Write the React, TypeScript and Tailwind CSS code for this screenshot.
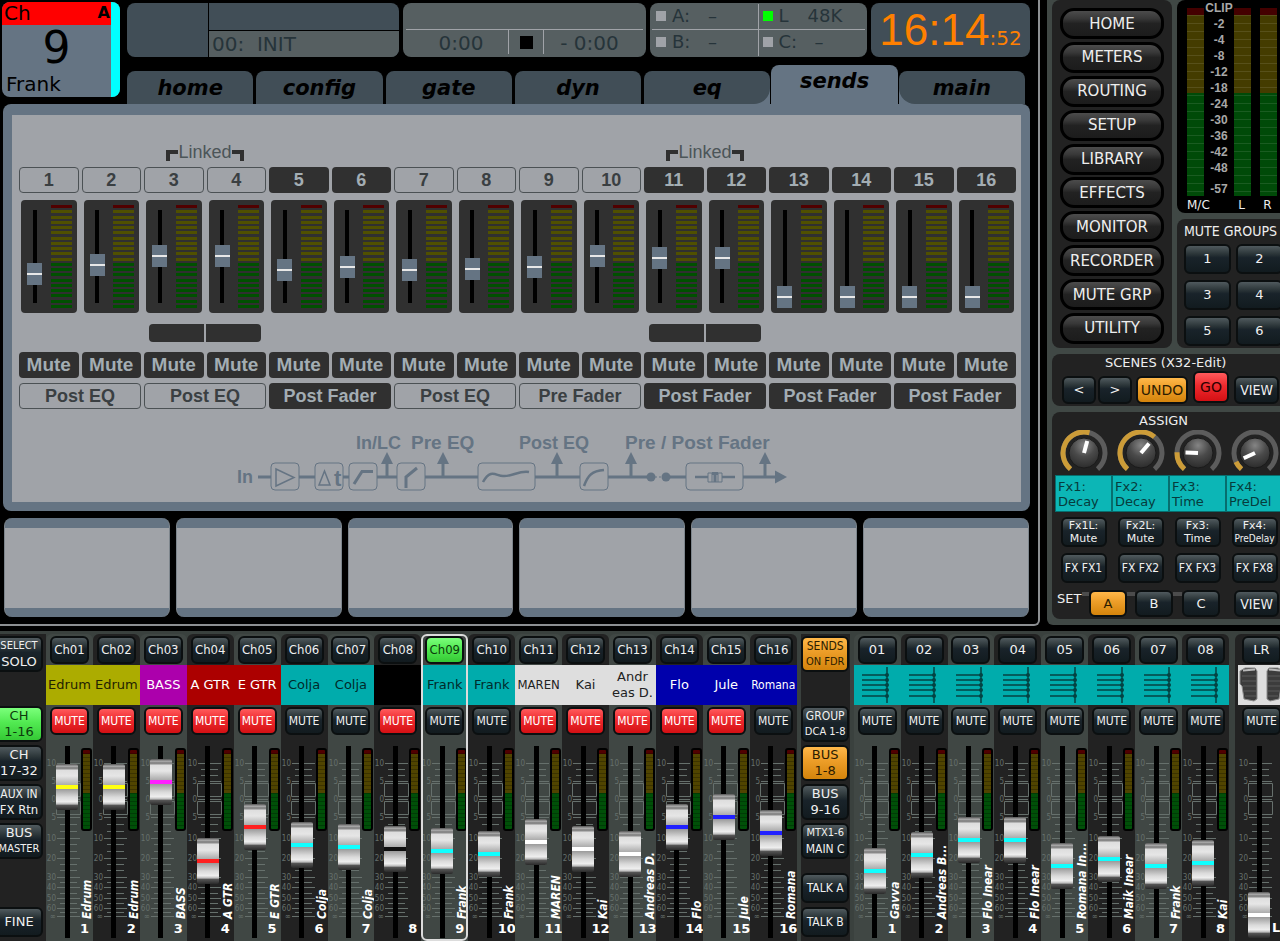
import { clsx } from "clsx";

const SANS = "font-['DejaVu_Sans',sans-serif]";
const NARROW = "font-['DejaVu_Sans_Condensed','DejaVu_Sans',sans-serif]";
const LCD = "font-['Liberation_Sans',sans-serif]";

type Tone = "dark" | "red" | "green" | "orange";

const tones: Record<Tone, string> = {
  dark: "text-[#f0f0f0] bg-[linear-gradient(#505a5e,#2c3639_30%,#19232a_45%,#121b1f)]",
  red: "text-white bg-[linear-gradient(#ff5a5c,#ee2a2e_45%,#d41014)]",
  green: "text-[#0c3a0c] bg-[linear-gradient(#7bff7b,#52ea52_45%,#35c935)]",
  orange: "text-[#2c1c00] bg-[linear-gradient(#ffb84a,#ee9f2a_40%,#d4840c)]",
};

function Key({ tone = "dark", className, children, label }: {
  tone?: Tone;
  className?: string;
  children: React.ReactNode;
  label?: string;
}) {
  return (
    <button
      type="button"
      aria-label={label}
      className={clsx(
        "shrink-0 flex flex-col items-center justify-center rounded-md border-2 border-[#0b0f10] whitespace-nowrap",
        tones[tone],
        className
      )}
    >
      {children}
    </button>
  );
}

/* ---------- channel screen ---------- */

const tabs = ["home", "config", "gate", "dyn", "eq", "sends", "main"];

const sends = [
  { level: 23 }, { level: 32 }, { level: 41 }, { level: 41 },
  { level: 27, dark: true }, { level: 30, dark: true }, { level: 27 }, { level: 28 },
  { level: 30 }, { level: 41 }, { level: 39, dark: true }, { level: 39, dark: true },
  { level: 0, dark: true }, { level: 0, dark: true }, { level: 0, dark: true }, { level: 0, dark: true },
];

const pairs = [
  { tap: "Post EQ" },
  { tap: "Post EQ", linked: true },
  { tap: "Post Fader", dark: true },
  { tap: "Post EQ" },
  { tap: "Pre Fader" },
  { tap: "Post Fader", dark: true, linked: true },
  { tap: "Post Fader", dark: true },
  { tap: "Post Fader", dark: true },
];

const lightBox = "border border-[#4b5154] text-[#3a3f42]";
const darkBox = "bg-[#303030] text-[#a3adb3]";

function ChannelBadge() {
  return (
    <div className={clsx(SANS, "w-[118px] h-[95px] mt-[2px] ml-[2px] shrink-0 flex rounded-lg overflow-hidden bg-[#657483] text-black")}>
      <div className="flex-1 flex flex-col">
        <div className="h-[23px] bg-[#ff0000] flex justify-between pl-[2px] pr-px leading-[22px]">
          <span className="text-xl leading-[22px]">Ch</span>
          <span className="text-base font-bold leading-[22px]">A</span>
        </div>
        <div className="flex-1 text-[44px] leading-[46px] text-center">9</div>
        <div className="text-xl leading-[26px] pl-1">Frank</div>
      </div>
      <div className="w-[9px] bg-[#00ffff]" />
    </div>
  );
}

function SyncLight({ on, name, value }: { on?: boolean; name: string; value: string }) {
  return (
    <div className="flex items-center text-lg leading-6 text-[#26343a] pl-1">
      <span className={clsx("size-[10px] mr-[6px]", on ? "bg-[#00ff00]" : "bg-[#a0a3a8]")} />
      <span className={on ? "w-[29px]" : "w-9"}>{name}</span>
      <span>{value}</span>
    </div>
  );
}

function StatusRow() {
  return (
    <div className={clsx(SANS, "grid grid-cols-[272fr_243fr_217fr_159fr] gap-1 mt-[3px] h-[54px]")}>
      <div className="flex rounded-lg overflow-hidden bg-[#414e57]">
        <div className="w-[81px]" />
        <div className="flex-1 flex flex-col border-l border-black">
          <div className="h-[27px]" />
          <div className="flex-1 border-t border-black bg-[#565f61] text-xl leading-[26px] text-[#26343a] whitespace-pre pl-[3px]">
            {"00:  INIT"}
          </div>
        </div>
      </div>
      <div className="rounded-lg bg-[#565f61] px-[3px] text-[#26343a] text-xl">
        <div className="h-[27px] border-b border-[#a0a3a8]" />
        <div className="h-6 flex items-stretch leading-[26px]">
          <span className="w-[102px] text-center pl-2">0:00</span>
          <span className="w-9 border-x border-[#a0a3a8] flex items-center justify-center">
            <span className="size-[13px] bg-black" />
          </span>
          <span className="flex-1 text-center pr-2">- 0:00</span>
        </div>
      </div>
      <div className="rounded-lg bg-[#565f61] px-[2px] grid grid-cols-2 grid-rows-2 py-px">
        <div className="border-r border-b border-[#a0a3a8]"><SyncLight name="A:" value="–" /></div>
        <div className="border-b border-[#a0a3a8]"><SyncLight on name="L" value="48K" /></div>
        <div className="border-r border-[#a0a3a8]"><SyncLight name="B:" value="–" /></div>
        <div><SyncLight name="C:" value="–" /></div>
      </div>
      <div className="rounded-lg bg-[#414e57] flex items-baseline justify-center text-[#ff8000]">
        <span className={clsx(LCD, "text-[44px] leading-[54px]")}>16:14</span>
        <span className="text-xl">:52</span>
      </div>
    </div>
  );
}

function Tabs() {
  return (
    <ul className="mt-auto pr-[5px] flex items-end gap-[3px]">
      {tabs.map((tab) => (
        <li
          key={tab}
          className={clsx(
            "flex-1",
            tab === "sends" && "-mx-[2px]",
            (tab === "eq" || tab === "main") && "bg-[linear-gradient(to_top,#657483_16px,transparent_16px)]"
          )}
        >
          <button
            type="button"
            className={clsx(
              SANS,
              "block w-full rounded-t-lg text-[21px] leading-8 font-bold italic text-black",
              tab === "sends" ? "h-[39px] bg-[#657483] pb-[7px]" : "h-[33px] bg-[#414e57]",
              tab === "eq" && "rounded-br-2xl",
              tab === "main" && "rounded-bl-2xl"
            )}
          >
            {tab}
          </button>
        </li>
      ))}
    </ul>
  );
}

function SendFader({ index, level }: { index: number; level: number }) {
  return (
    <div className="mx-[2px] h-[113px] rounded-[4px] bg-[#303030] flex justify-between pl-[6px] pr-[5px] py-[5px]">
      <input
        type="range"
        min={0}
        max={81}
        defaultValue={level}
        aria-label={`Send ${index + 1} level`}
        className="appearance-none [writing-mode:vertical-lr] [direction:rtl] w-[15px] h-[103px] bg-[linear-gradient(#000,#000)] bg-[length:4px_93px] bg-center bg-no-repeat [&::-webkit-slider-thumb]:appearance-none [&::-webkit-slider-thumb]:w-[15px] [&::-webkit-slider-thumb]:h-[22px] [&::-webkit-slider-thumb]:bg-[linear-gradient(#657483_10px,#e8e8e8_10px,#e8e8e8_12px,#657483_12px)]"
      />
      <div className="w-[21px] flex flex-col justify-between">
        {Array.from({ length: 20 }, (_, i) => (
          <div key={i} className={clsx("h-[3px]", i === 0 ? "bg-[#500000]" : i < 11 ? "bg-[#505000]" : "bg-[#005000]")} />
        ))}
      </div>
    </div>
  );
}

function SignalPath() {
  const taps = [155, 211, 325, 399, 533];
  const boxes = [[39, 28], [83, 28], [117, 28], [165, 28], [246, 57], [348, 28], [454, 57]];
  return (
    <svg viewBox="2 0 568 65" className="block mx-auto mt-[21px] w-[568px] h-[65px]" fill="none" stroke="#657483">
      <path d="M26 47H39M67 47H83M111 47H117M145 47H165M193 47H246M303 47H348M376 47H419M434 47H454M511 47H545" strokeWidth="3" />
      <path d="M419 47H434" strokeDasharray="2 2" />
      {boxes.map(([x, w]) => (
        <rect key={x} x={x} y="33" width={w} height="27" rx="4" strokeWidth="1" />
      ))}
      <path d="M44 39V56L62 47.500Z" strokeWidth="1.5" />
      <path d="M87 55L92.500 41L98 55Z" strokeWidth="1.5" />
      <path d="M122 54L130 41.500H141M174 58V47L185 38" strokeWidth="3" />
      <path d="M251 52C259 38 264 46 271 46C279 47 288 40 297 42" strokeWidth="2.500" />
      <path d="M352 56C356 45 360 41 372 40" strokeWidth="2.500" />
      <path d="M463 47H476M490 47H503" strokeWidth="2.500" />
      <path d="M476 43H490V52H476ZM480 43V52M486 43V52" />
      <path d="M480 43.500H486M483 43V52" strokeWidth="3" />
      {taps.map((x) => (
        <g key={x}>
          <path d={`M${x} 47V33`} strokeWidth="3" />
          <path d={`M${x - 6} 34L${x} 22L${x + 6} 34Z`} fill="#657483" stroke="none" />
        </g>
      ))}
      <g fill="#657483" stroke="none" className={clsx(LCD, "text-lg font-bold")}>
        <circle cx="419" cy="47" r="4.500" />
        <circle cx="434" cy="47" r="4.500" />
        <path d="M543 40.500L555 47L543 53.500Z" />
        <text x="5" y="53">In</text>
        <text x="102" y="56" className="text-[22px]">t</text>
        <text x="124" y="19">In/LC</text>
        <text x="179" y="19" className="text-[19px]">Pre EQ</text>
        <text x="287" y="19">Post EQ</text>
        <text x="393" y="19" className="text-[19px]">Pre / Post Fader</text>
      </g>
    </svg>
  );
}

function SendsPanel() {
  return (
    <section className="ml-[3px] mr-2 rounded-lg bg-[#657483] px-[9px] pt-[11px] pb-[9px]">
      <div className={clsx(LCD, "bg-[#a0a3a8] pt-[27px] pb-[7px] pl-[7px] pr-[5px]")}>
        <div className="grid grid-cols-8 gap-[3px] h-5">
          {pairs.map((pair, i) => (
            <div key={i} className="flex justify-center text-lg leading-5 text-[#4c5558]">
              {pair.linked && (
                <>
                  <span className="mt-2 w-3 h-[11px] border-t-4 border-l-4 border-[#303030]" />
                  Linked
                  <span className="mt-2 w-3 h-[11px] border-t-4 border-r-4 border-[#303030]" />
                </>
              )}
            </div>
          ))}
        </div>
        <div className="grid grid-cols-16 gap-[3px] mt-[5px]">
          {sends.map((send, i) => (
            <button key={i} type="button" className={clsx("h-[26px] rounded-[4px] text-lg leading-6 font-bold", send.dark ? darkBox : lightBox)}>
              {i + 1}
            </button>
          ))}
        </div>
        <div className="grid grid-cols-16 gap-[3px] mt-[7px]">
          {sends.map((send, i) => (
            <SendFader key={i} index={i} level={send.level} />
          ))}
        </div>
        <div className="grid grid-cols-8 gap-[3px] mt-[11px] h-[18px]">
          {pairs.map((pair, i) => (
            <div key={i} className="flex gap-[2px] px-[5px]">
              {pair.linked && (
                <>
                  <span className="flex-1 rounded-l-[4px] bg-[#303030]" />
                  <span className="flex-1 rounded-r-[4px] bg-[#303030]" />
                </>
              )}
            </div>
          ))}
        </div>
        <div className="grid grid-cols-16 gap-[3px] mt-[10px]">
          {sends.map((_, i) => (
            <button key={i} type="button" aria-label={`Mute send ${i + 1}`} className={clsx("h-[26px] rounded-[4px] text-[19px] leading-[26px] font-bold", darkBox)}>
              Mute
            </button>
          ))}
        </div>
        <div className="grid grid-cols-8 gap-[3px] mt-[5px]">
          {pairs.map((pair, i) => (
            <button key={i} type="button" className={clsx("h-[26px] rounded-[4px] text-lg leading-6 font-bold", pair.dark ? darkBox : lightBox)}>
              {pair.tap}
            </button>
          ))}
        </div>
        <SignalPath />
      </div>
    </section>
  );
}

function Screen() {
  return (
    <main className="flex-1 min-w-0 border-r-2 border-b-2 border-[#8c8f92] rounded-br-md pb-[7px]">
      <div className="flex h-[104px]">
        <ChannelBadge />
        <div className="flex-1 flex flex-col ml-[7px] mr-2">
          <StatusRow />
          <Tabs />
        </div>
      </div>
      <SendsPanel />
      <div className="grid grid-cols-6 gap-[6px] mt-[7px] ml-1 mr-[9px]">
        {Array.from({ length: 6 }, (_, i) => (
          <div key={i} className="h-[99px] rounded-lg border-x border-[#7d858c] bg-[linear-gradient(#657483_10px,#a0a3a8_10px,#a0a3a8_90px,#657483_90px)]" />
        ))}
      </div>
    </main>
  );
}

/* ---------- sidebar ---------- */

const menu = ["HOME", "METERS", "ROUTING", "SETUP", "LIBRARY", "EFFECTS", "MONITOR", "RECORDER", "MUTE GRP", "UTILITY"];
const scale = ["CLIP", "-2", "-4", "-8", "-12", "-18", "-24", "-30", "-36", "-42", "-48"];

function OutputMeter() {
  return (
    <div className="w-[17px] h-[188px] bg-[repeating-linear-gradient(transparent_0px,transparent_7px,rgba(255,255,255,0.1)_7px,rgba(255,255,255,0.1)_8px),linear-gradient(#440000_7px,#443c00_7px,#443c00_85px,#004a08_85px)]" />
  );
}

const knobs = [
  { angle: 15, lines: ["Fx1:", "Decay"], mute: ["Fx1L:", "Mute"], fx: "FX FX1" },
  { angle: 40, lines: ["Fx2:", "Decay"], mute: ["Fx2L:", "Mute"], fx: "FX FX2" },
  { angle: -88, lines: ["Fx3:", "Time"], mute: ["Fx3:", "Time"], fx: "FX FX3" },
  { angle: -115, lines: ["Fx4:", "PreDel"], mute: ["Fx4:", "PreDelay"], fx: "FX FX8" },
];

function arc(from: number, to: number) {
  const at = (deg: number) => {
    const rad = (deg * Math.PI) / 180;
    return `${24 + 21 * Math.sin(rad)} ${23 - 21 * Math.cos(rad)}`;
  };
  return `M${at(from)}A21 21 0 ${to - from > 180 ? 1 : 0} 1 ${at(to)}`;
}

function Knob({ angle }: { angle: number }) {
  return (
    <svg viewBox="0 0 48 45" className="block w-12 h-[45px] mx-auto" fill="none">
      <defs>
        <radialGradient id="knob" cx="0.5" cy="0.25" r="0.75">
          <stop offset="0" stopColor="#858585" />
          <stop offset="0.5" stopColor="#4a4a4a" />
          <stop offset="1" stopColor="#2c2c2c" />
        </radialGradient>
      </defs>
      <path d={arc(-140, 140)} stroke="#5c5c5c" strokeWidth="5" />
      <path d={arc(-140, angle)} stroke="#cc9c38" strokeWidth="5" />
      <circle cx="24" cy="23" r="15" fill="url(#knob)" stroke="#1a1a1a" />
      <path d="M24 23V10.500" stroke="#fff" strokeWidth="4" transform={`rotate(${angle} 24 23)`} />
    </svg>
  );
}

function Sidebar() {
  return (
    <aside className={clsx(SANS, "w-[233px] shrink-0 ml-[7px] pl-[5px] pb-[6px] self-start overflow-hidden rounded-bl-md bg-[#404845] text-[#eee]")}>
      <div className="flex gap-[5px] h-[348px]">
        <nav className="w-[120px] shrink-0 rounded-lg bg-[#222] pt-2 pb-1 flex flex-col items-center justify-between">
          {menu.map((item) => (
            <button
              key={item}
              type="button"
              className="w-[104px] h-[31px] shrink-0 rounded-[14px] border-[3px] border-black bg-[linear-gradient(#4c4c4c,#383838_30%,#222_50%,#1c1c1c)] text-[15px] leading-6"
            >
              {item}
            </button>
          ))}
        </nav>
        <div className="w-[112px] shrink-0 flex flex-col gap-[6px]">
          <section className="h-[213px] rounded-lg bg-black pl-[10px] pt-2">
            <div className="flex">
              <OutputMeter />
              <div className={clsx(LCD, "w-[30px] -mt-2 flex flex-col text-xs font-bold text-[#a8a8a8] text-center")}>
                <div className="h-[173px] flex flex-col">
                  {scale.map((mark) => (
                    <span key={mark} className="flex-1 leading-4">{mark}</span>
                  ))}
                </div>
                <span className="mt-2 leading-4">-57</span>
              </div>
              <OutputMeter />
              <div className="w-[9px]" />
              <OutputMeter />
            </div>
            <div className="flex text-xs leading-4">
              <span className="w-[46px]">M/C</span>
              <span className="w-[17px] text-center">L</span>
              <span className="w-[35px] text-center">R</span>
            </div>
          </section>
          <section className="flex-1 rounded-lg bg-[#222] pl-[7px]">
            <h2 className={clsx(NARROW, "text-sm leading-[25px] whitespace-nowrap")}>MUTE GROUPS</h2>
            <div className="grid grid-cols-[47px_47px] gap-x-[5px] gap-y-[6px] text-[13px]">
              {[1, 2, 3, 4, 5, 6].map((n) => (
                <Key key={n} className="h-[30px]" label={`Mute group ${n}`}>{n}</Key>
              ))}
            </div>
          </section>
        </div>
      </div>

      <section className="mt-[6px] w-[240px] h-[52px] rounded-l-lg bg-[#222]">
        <h2 className="text-[13px] leading-[18px] pl-[53px]">SCENES (X32-Edit)</h2>
        <div className="flex items-end pl-[10px] h-8 text-[13px]">
          <Key className="w-[34px] h-7" label="Previous scene">&lt;</Key>
          <Key className="w-[34px] h-7 ml-[2px]" label="Next scene">&gt;</Key>
          <Key tone="orange" className="w-[52px] h-7 ml-1 text-sm">UNDO</Key>
          <Key tone="red" className="w-9 h-8 ml-[5px] self-start -mt-px text-sm text-[#2c0000]!">GO</Key>
          <Key className={clsx(NARROW, "w-[45px] h-7 ml-[5px] text-sm")}>VIEW</Key>
        </div>
      </section>

      <section className="mt-[6px] w-[240px] rounded-l-lg bg-[#222] pl-[3px] pb-[2px]">
        <h2 className="text-[13px] leading-[18px] pl-[84px]">ASSIGN</h2>
        <div className="grid grid-cols-[57px_57px_57px_57px]">
          {knobs.map((knob) => (
            <div key={knob.fx} className="flex flex-col">
              <Knob angle={knob.angle} />
              <div className="h-[37px] border border-[#076e6e] bg-[#0cb6b6] text-[#063c3c] text-[13px] leading-[15px] pl-[2px] pt-[3px]">
                {knob.lines[0]}<br />{knob.lines[1]}
              </div>
              <Key className="mx-auto mt-[5px] w-[46px] h-[30px] text-[11px] leading-[13px]">
                <span>{knob.mute[0]}</span>
                <span className={clsx(knob.mute[1] === "PreDelay" && [NARROW, "text-[10px]"])}>{knob.mute[1]}</span>
              </Key>
              <Key className={clsx(NARROW, "mx-auto mt-[6px] w-[46px] h-[30px] text-xs")}>{knob.fx}</Key>
            </div>
          ))}
        </div>
        <div className="flex mt-[7px] text-[13px]">
          <span className="w-[27px] leading-[18px] pl-[2px]">SET</span>
          <span className="w-[7px] h-1 mt-[2px] bg-[#4c4c4c]" />
          <Key tone="orange" className="w-[38px] h-[27px]">A</Key>
          <span className="w-2 h-1 mt-[2px] bg-[#4c4c4c]" />
          <Key className="w-[38px] h-[27px]">B</Key>
          <span className="w-[9px] h-1 mt-[2px] bg-[#4c4c4c]" />
          <Key className="w-[38px] h-[27px]">C</Key>
          <Key className={clsx(NARROW, "w-[45px] h-[27px] ml-[14px] text-sm")}>VIEW</Key>
        </div>
      </section>
    </aside>
  );
}

/* ---------- mixer ---------- */

type Color = "yellow" | "magenta" | "red" | "cyan" | "black" | "white" | "blue";

const scribble: Record<Color, string> = {
  yellow: "bg-[#acac00] text-[#222200]",
  magenta: "bg-[#ac00ac] text-white",
  red: "bg-[#ac0000] text-white",
  cyan: "bg-[#00acac] text-[#002a2a]",
  black: "bg-black text-white",
  white: "bg-[#dedede] text-[#222]",
  blue: "bg-[#0000ac] text-white",
};

const caps: Record<Color, string> = {
  yellow: "[--cap:#ffff10]",
  magenta: "[--cap:#ff20ff]",
  red: "[--cap:#ff2020]",
  cyan: "[--cap:#10ffff]",
  black: "[--cap:#101010]",
  white: "[--cap:#ffffff]",
  blue: "[--cap:#2020ff]",
};

type StripData = {
  id: string;
  no: string;
  name: string;
  display?: React.ReactNode;
  color: Color;
  level: number;
  muted?: boolean;
  selected?: boolean;
};

const channels: StripData[] = [
  { id: "Ch01", no: "1", name: "Edrum", color: "yellow", level: 128, muted: true },
  { id: "Ch02", no: "2", name: "Edrum", color: "yellow", level: 128, muted: true },
  { id: "Ch03", no: "3", name: "BASS", color: "magenta", level: 133, muted: true },
  { id: "Ch04", no: "4", name: "A GTR", color: "red", level: 54, muted: true },
  { id: "Ch05", no: "5", name: "E GTR", color: "red", level: 88, muted: true },
  { id: "Ch06", no: "6", name: "Colja", color: "cyan", level: 70 },
  { id: "Ch07", no: "7", name: "Colja", color: "cyan", level: 68 },
  { id: "Ch08", no: "8", name: "", color: "black", level: 66, muted: true },
  { id: "Ch09", no: "9", name: "Frank", color: "cyan", level: 64, selected: true },
  { id: "Ch10", no: "10", name: "Frank", color: "cyan", level: 61 },
  { id: "Ch11", no: "11", name: "MAREN", display: <span className={NARROW}>MAREN</span>, color: "white", level: 73, muted: true },
  { id: "Ch12", no: "12", name: "Kai", color: "white", level: 66, muted: true },
  { id: "Ch13", no: "13", name: "Andreas D.", display: <span>Andr<br />eas D.</span>, color: "white", level: 61, muted: true },
  { id: "Ch14", no: "14", name: "Flo", color: "blue", level: 88, muted: true },
  { id: "Ch15", no: "15", name: "Jule", color: "blue", level: 98, muted: true },
  { id: "Ch16", no: "16", name: "Romana", display: <span className={clsx(NARROW, "text-xs")}>Romana</span>, color: "blue", level: 82 },
];

const buses: StripData[] = [
  { id: "01", no: "1", name: "Gavva", level: 44 },
  { id: "02", no: "2", name: "Andreas B...", level: 60 },
  { id: "03", no: "3", name: "Flo Inear", level: 75 },
  { id: "04", no: "4", name: "Flo Inear", level: 75 },
  { id: "05", no: "5", name: "Romana In...", level: 49 },
  { id: "06", no: "6", name: "Maik Inear", level: 56 },
  { id: "07", no: "7", name: "Frank", level: 49 },
  { id: "08", no: "8", name: "Kai", level: 52 },
].map((bus) => ({ ...bus, color: "cyan" as Color, display: <BusIcon /> }));

function BusIcon() {
  return (
    <svg viewBox="0 0 32 38" className="w-8 h-[38px]" stroke="#045c5c" strokeWidth="2" fill="#034444">
      <path d="M1 9H26M1 14H26M1 19H26M1 24H26M1 30H26M26 1V37" />
      {[9, 14, 19, 24, 30].map((y) => (
        <circle key={y} cx="26" cy={y} r="2" stroke="none" />
      ))}
    </svg>
  );
}

function SpeakersIcon() {
  return (
    <svg viewBox="0 0 47 38" className="w-[47px] h-[38px] shrink-0">
      {["M2 5L7 2H17L19 5V33L16 35L6 33L4 20L2 18Z", "M45 5L40 2H31L29 5V33L32 35L41 33L43 20L45 18Z"].map((d) => (
        <path key={d} d={d} fill="#3c3c3c" stroke="#8c8c8c" />
      ))}
      <path d="M4 10H18M4 15H18M5 20H18M6 25H18M7 30H18M30 10H43M30 15H43M30 20H42M30 25H41M30 30H40" stroke="#5a5a5a" />
      <path d="M5 4.500L17 3.500M31 3.500L42 4.500" stroke="#b8b8b8" strokeWidth="2" />
    </svg>
  );
}

// dB marks, y measured from the top of the fader slot
const marks: [string, number][] = [
  ["10", 17], ["5", 35], ["0", 53], ["5", 71], ["10", 92], ["20", 112],
  ["30", 131], ["40", 141], ["50", 152], ["60", 162], ["∞", 170],
];
const minor = [23, 29, 78, 85, 98, 105, 118, 124, 136, 147, 157, 166];

function FaderScale() {
  return (
    <svg viewBox="0 0 36 192" className="[grid-area:1/1] w-9 h-48" fill="none" stroke="#66706c" strokeWidth="1">
      {marks.map(([, y], i) => (
        <path key={i} d={`M11 ${y}.500H34`} />
      ))}
      {minor.map((y) => (
        <path key={y} d={`M14 ${y}.500H31`} />
      ))}
      <path d="M10.500 37.500H34.500V50.500H10.500ZM10.500 55.500H34.500V68.500H10.500Z" />
      <g fill="#66706c" stroke="none" className={clsx(NARROW, "text-[8px]")} textAnchor="end">
        {marks.map(([label, y], i) => (
          <text key={i} x="10" y={y + 3}>{label}</text>
        ))}
      </g>
    </svg>
  );
}

function Strip({ strip, light, output }: { strip: StripData; light?: boolean; output?: boolean }) {
  return (
    <div
      className={clsx(
        "relative min-w-0 rounded-t-md pt-[2px] pb-[2px] flex flex-col items-center",
        light ? "bg-[#404744]" : "bg-[#222]",
        strip.selected && "after:absolute after:inset-0 after:rounded-md after:border-2 after:border-[#dcdcdc] after:pointer-events-none"
      )}
    >
      <Key tone={strip.selected ? "green" : "dark"} className={clsx(output ? SANS : NARROW, "w-[39px] h-7 text-[13px]")}>
        {strip.id}
      </Key>
      <div className={clsx("mt-px w-full h-10 flex items-center justify-center text-center text-[13px] leading-4 whitespace-nowrap overflow-hidden", scribble[strip.color])}>
        {strip.display ?? strip.name}
      </div>
      <Key tone={strip.muted ? "red" : "dark"} className={clsx(NARROW, "mt-[2px] w-[39px] h-7 text-xs")}>
        MUTE
      </Key>
      <div className="self-stretch flex mt-[11px]">
        <div className="w-[34px] shrink-0 grid">
          <FaderScale />
          <input
            type="range"
            min={0}
            max={146}
            defaultValue={strip.level}
            aria-label={`${strip.id} fader`}
            className={clsx(
              "[grid-area:1/1] ml-[10px] w-[22px] h-48 appearance-none [writing-mode:vertical-lr] [direction:rtl] bg-[linear-gradient(#000,#000)] bg-[length:5px_100%] bg-center bg-no-repeat [&::-webkit-slider-thumb]:appearance-none [&::-webkit-slider-thumb]:w-[22px] [&::-webkit-slider-thumb]:h-[46px] [&::-webkit-slider-thumb]:rounded-[2px] [&::-webkit-slider-thumb]:bg-[linear-gradient(#555,#aaa_5%,#777_9%,#dedede_14%,#e6e6e6_26%,#aaa_46%,var(--cap)_46%,var(--cap)_54%,#999_54%,#dadada_72%,#eee_82%,#bbb_87%,#555_90%,#2a2a2a)]",
              caps[strip.color]
            )}
          />
        </div>
        {!output || strip.name ? (
          <div className="flex-1 min-w-0 flex flex-col items-center">
            <div className="mt-[2px] w-[11px] h-[83px] shrink-0 rounded-[3px] border-2 border-black bg-[repeating-linear-gradient(transparent_0px,transparent_3px,rgba(0,0,0,0.25)_3px,rgba(0,0,0,0.25)_4px),linear-gradient(#500000_4px,#504400_4px,#504400_43px,#005008_43px)]" />
            <div className={clsx(NARROW, "h-[88px] pr-px [writing-mode:vertical-rl] rotate-180 text-xs leading-3 font-bold italic text-white whitespace-nowrap")}>
              {strip.name}
            </div>
            <div className="pr-1 text-[13px] leading-5 font-bold text-white">{strip.no}</div>
          </div>
        ) : (
          <div className="flex-1 self-end text-[13px] leading-5 font-bold text-white">{strip.no}</div>
        )}
      </div>
    </div>
  );
}

type Line = { text: string; size?: string };

function LayerKey({ tone, lines, className }: { tone?: Tone; lines: Line[]; className: string }) {
  return (
    <Key tone={tone} className={clsx("w-12 leading-4", className)}>
      {lines.map((line) => (
        <span key={line.text} className={line.size ?? "text-[13px]"}>{line.text}</span>
      ))}
    </Key>
  );
}

const narrow13 = clsx(NARROW, "text-[13px]");
const narrow12 = clsx(NARROW, "text-xs");
const narrow11 = clsx(NARROW, "text-[11px]");

function Mixer() {
  return (
    <div className={clsx(SANS, "mt-[5px] pt-[3px] flex bg-[#3a413e] overflow-hidden")}>
      <div className="w-[46px] shrink-0 bg-[#222] pt-[2px] flex flex-col">
        <LayerKey className="-ml-[5px] h-9" lines={[{ text: "SELECT", size: narrow11 }, { text: "SOLO" }]} />
        <LayerKey tone="green" className="-ml-[5px] h-9 mt-[34px]" lines={[{ text: "CH" }, { text: "1-16" }]} />
        <LayerKey className="-ml-[5px] h-9 mt-[3px]" lines={[{ text: "CH" }, { text: "17-32" }]} />
        <LayerKey className="-ml-[5px] h-9 mt-[3px]" lines={[{ text: "AUX IN", size: narrow12 }, { text: "FX Rtn", size: narrow13 }]} />
        <LayerKey className="-ml-[5px] h-9 mt-[3px]" lines={[{ text: "BUS" }, { text: "MASTER", size: narrow11 }]} />
        <LayerKey className="-ml-[5px] h-[30px] mt-auto mb-1" lines={[{ text: "FINE" }]} />
      </div>
      <div className="flex-[2] min-w-0 grid grid-cols-16">
        {channels.map((strip, i) => (
          <Strip key={strip.id} strip={strip} light={i % 2 === 0} />
        ))}
      </div>
      <div className="w-[57px] shrink-0 bg-[#222] border-x-4 border-[#3a413e] pt-[2px] flex flex-col items-center">
        <LayerKey tone="orange" className="h-9" lines={[{ text: "SENDS", size: narrow12 }, { text: "ON FDR", size: narrow11 }]} />
        <LayerKey className="h-9 mt-[34px]" lines={[{ text: "GROUP", size: narrow12 }, { text: "DCA 1-8", size: narrow11 }]} />
        <LayerKey tone="orange" className="h-9 mt-[3px]" lines={[{ text: "BUS" }, { text: "1-8" }]} />
        <LayerKey className="h-9 mt-[3px]" lines={[{ text: "BUS" }, { text: "9-16" }]} />
        <LayerKey className="h-9 mt-[3px]" lines={[{ text: "MTX1-6", size: narrow11 }, { text: "MAIN C", size: narrow12 }]} />
        <LayerKey className="h-[30px] mt-auto" lines={[{ text: "TALK A", size: narrow12 }]} />
        <LayerKey className="h-[30px] mt-1 mb-1" lines={[{ text: "TALK B", size: narrow12 }]} />
      </div>
      <div className="flex-1 min-w-0 grid grid-cols-8">
        {buses.map((strip, i) => (
          <Strip key={strip.id} strip={strip} light={i % 2 === 0} output />
        ))}
      </div>
      <div className="ml-[6px] w-[45px] shrink-0 overflow-hidden rounded-tl-md bg-[#222]">
        <div className="ml-[3px] w-[47px]">
          <Strip
            strip={{ id: "LR", no: "LR", name: "", display: <SpeakersIcon />, color: "white", level: 0 }}
            output
          />
        </div>
      </div>
    </div>
  );
}

export default function App() {
  return (
    <div className="min-h-screen bg-black overflow-hidden">
      <div className="flex">
        <Screen />
        <Sidebar />
      </div>
      <Mixer />
    </div>
  );
}
